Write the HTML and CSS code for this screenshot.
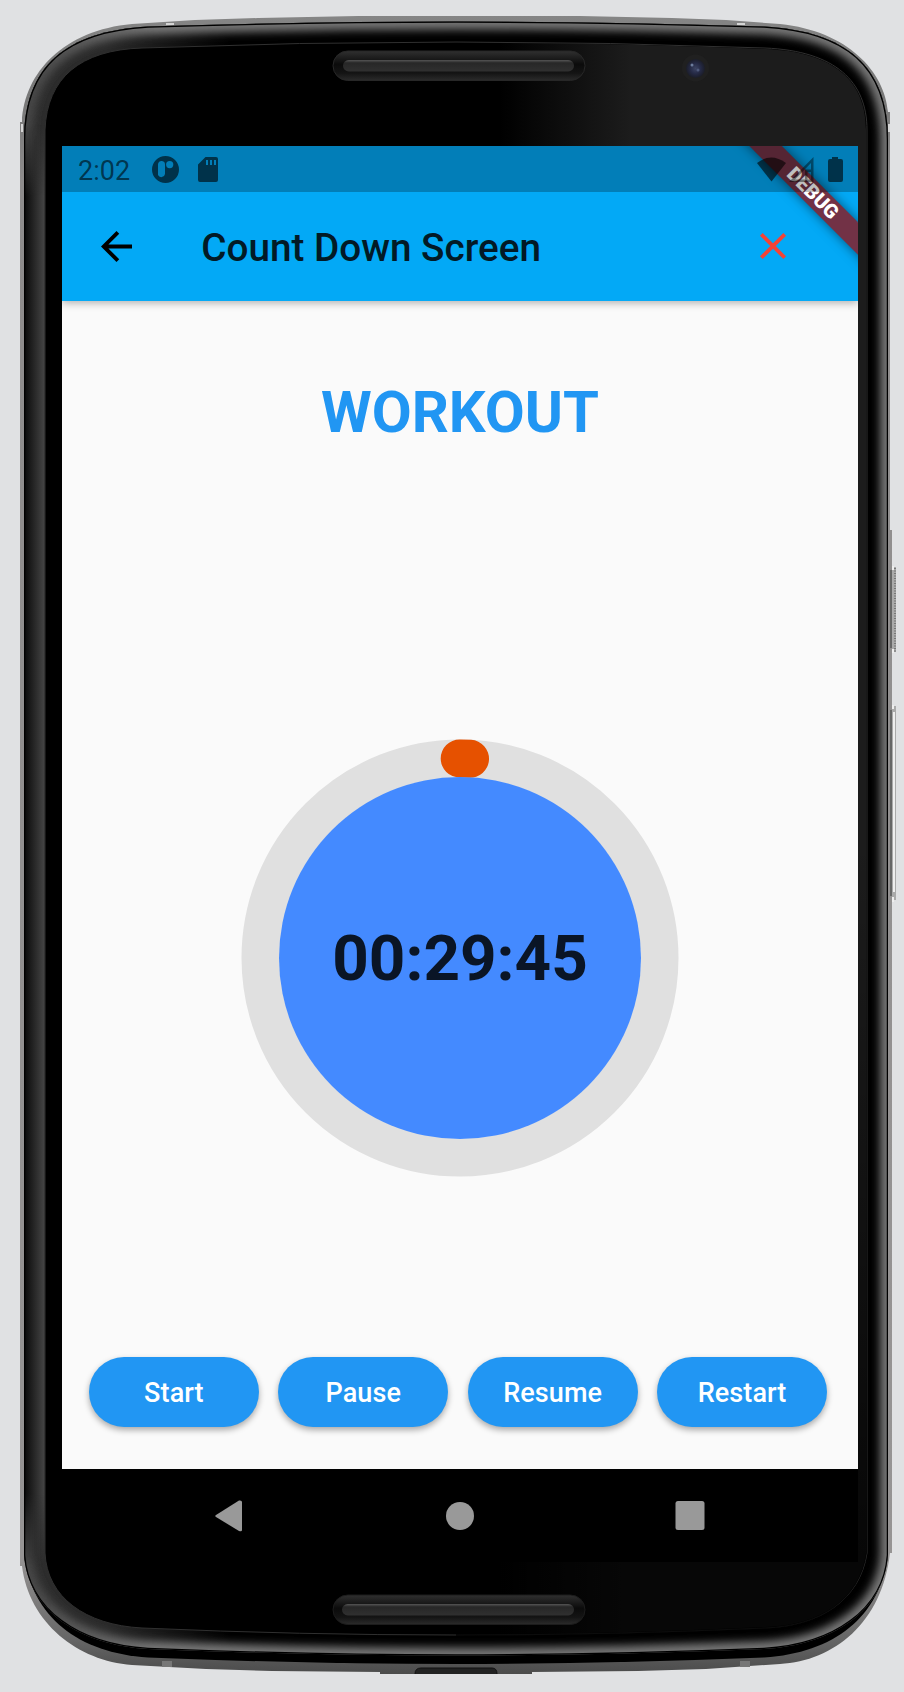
FILE: index.html
```html
<!DOCTYPE html>
<html lang="en">
<head>
<meta charset="utf-8">
<title>Count Down Screen</title>
<link rel="stylesheet" href="styles.css">
</head>
<body>
<div class="phone">
  <svg class="frame" viewBox="0 0 904 1692" aria-hidden="true">
    <defs>
      <path id="shell" d="M24 140 C24 66 66 31 148 26.500 Q310 21.500 456 21.500 Q602 21.500 764 26.500 C846 31 888 66 888 140 V1555 C880 1617 834 1653 764 1657.500 Q602 1664 456 1664 Q310 1664 148 1657.500 C78 1653 32 1617 24 1555 Z"/>
      <path id="body" d="M24 140 C24 66 66 31 148 26.500 Q310 21.500 456 21.500 Q602 21.500 764 26.500 C846 31 888 66 888 140 V1555 C884 1610 834 1645 764 1649 Q602 1655.500 456 1655.500 Q310 1655.500 148 1649 C78 1645 28 1610 24 1555 Z"/>
      <clipPath id="bodyClip"><use href="#body"/></clipPath>
      <filter id="soft" x="-5%" y="-5%" width="110%" height="110%"><feGaussianBlur stdDeviation="4"/></filter>
      <linearGradient id="rim" x1="0" x2="0" y1="0" y2="1"><stop offset="0" stop-color="#858585"/><stop offset=".05" stop-color="#777"/><stop offset=".1" stop-color="#8e8c8c"/><stop offset=".93" stop-color="#969494"/><stop offset=".98" stop-color="#656565"/><stop offset="1" stop-color="#4b4b4b"/></linearGradient>
      <linearGradient id="side" gradientUnits="userSpaceOnUse" x1="24" x2="46" y1="0" y2="0"><stop offset="0" stop-color="#080808"/><stop offset=".9" stop-color="#434343"/><stop offset="1" stop-color="#222"/></linearGradient>
      <linearGradient id="fade" gradientUnits="userSpaceOnUse" x1="0" x2="0" y1="125" y2="1565"><stop offset="0" stop-color="#000"/><stop offset=".05" stop-color="#fff"/><stop offset=".95" stop-color="#fff"/><stop offset="1" stop-color="#000"/></linearGradient>
      <mask id="sideFade" maskUnits="userSpaceOnUse" x="20" y="120" width="30" height="1450"><path fill="url(#fade)" d="M20 120H50V1570H20z"/></mask>
      <linearGradient id="corner" gradientUnits="userSpaceOnUse" x1="24" x2="230" y1="0" y2="0"><stop offset="0" stop-color="#2d2d2d"/><stop offset=".4" stop-color="#2a2a2a"/><stop offset="1" stop-color="#000"/></linearGradient>
      <linearGradient id="edge" gradientUnits="userSpaceOnUse" x1="24" x2="888" y1="0" y2="0"><stop offset="0" stop-color="#444"/><stop offset=".15" stop-color="#777"/><stop offset="1" stop-color="#777"/></linearGradient>
      <linearGradient id="glass" gradientUnits="userSpaceOnUse" x1="500" x2="630" y1="0" y2="0"><stop offset="0" stop-color="#1c1c1c" stop-opacity="0"/><stop offset="1" stop-color="#1c1c1c"/></linearGradient>
      <linearGradient id="dim" x1="0" x2="0" y1="0" y2="1"><stop offset=".5" stop-color="#000" stop-opacity="0"/><stop offset=".95" stop-color="#000" stop-opacity=".75"/></linearGradient>
      <linearGradient id="slot" x1="0" x2="0" y1="0" y2="1"><stop offset="0" stop-color="#303030"/><stop offset=".45" stop-color="#0b0b0b"/><stop offset=".75" stop-color="#141414"/><stop offset="1" stop-color="#2b2b2b"/></linearGradient>
      <linearGradient id="bar" x1="0" x2="0" y1="0" y2="1"><stop offset="0" stop-color="#555"/><stop offset=".25" stop-color="#272727"/><stop offset="1" stop-color="#303030"/></linearGradient>
      <radialGradient id="lens"><stop offset="0" stop-color="#3c4463"/><stop offset=".55" stop-color="#252a46"/><stop offset="1" stop-color="#1b1d28"/></radialGradient>
    </defs>
    <path fill="url(#rim)" d="M20 122 H22 C24 72 65 30 132 24 L195 20 L258 18 L358 16 H580 L672 18 L726 20 L780 24 C848 31 885 72 888 112 H890 V530 H892 V1553 H890 C882 1623 834 1661 780 1664 L706 1669 L638 1671 L532 1672 V1674 H380 V1672 L272 1671 L206 1669 L132 1665 C78 1661 29 1623 22 1566 H20 Z"/>
    <use href="#shell"/>
    <g clip-path="url(#bodyClip)">
      <use href="#body" fill="url(#corner)"/>
      <use href="#body" fill="none" stroke="url(#edge)" stroke-width="16" filter="url(#soft)"/>
      <path fill="url(#side)" mask="url(#sideFade)" d="M24 125 H45 V1565 H24Z"/>
      <use href="#body" fill="none" stroke="#000" stroke-width="2.500"/>
    </g>
    <path stroke="#303030" d="M45 130 C47 78 80 50 142 48 Q300 42 456 42 Q610 42 765 48 C836 51 867 82 867 130 V1553 C860 1600 820 1626 765 1628 Q610 1635 456 1635 Q300 1635 142 1628 C85 1625 47 1597 45 1553Z"/>
    <path fill="url(#glass)" d="M500 43 Q610 43 765 49 C836 52 866 82 866 130 V1553 C859 1600 820 1625 765 1627 Q610 1634 500 1634Z"/>
    <path fill="url(#dim)" d="M456 42 Q610 42 765 48 C836 51 867 82 867 130 V1553 C860 1600 820 1627 765 1629 Q610 1636 456 1636Z"/>
    <rect x="333" y="51" width="252" height="29.500" rx="14.750" fill="url(#slot)" stroke="#272727"/>
    <rect x="343" y="60" width="231" height="11.500" rx="5.750" fill="url(#bar)"/>
    <rect x="333" y="1595" width="252" height="29.500" rx="14.750" fill="url(#slot)" stroke="#1c1c1c"/>
    <rect x="342" y="1604" width="232" height="11.500" rx="5.750" fill="url(#bar)"/>
    <circle cx="695.500" cy="68" r="13.500" fill="#202020"/>
    <circle cx="695.500" cy="68.500" r="9.500" fill="url(#lens)"/>
    <circle cx="692" cy="65" r="1.500" fill="#6c7c9c"/><circle cx="698" cy="70" r="1.500" fill="#4f5a7c"/>
    <path fill="#222" stroke="#111" d="M415 1674 Q415 1668 421 1668 H492 Q497 1668 497 1674"/>
    <path fill="#d5d5d5" d="M166 23h8v2h-8zM737 23h8v2h-8zM21 124h2v8h-2zM888 124h2v8h-2z"/>
    <path fill="#777" d="M162 1661h10v6h-10zM740 1661h10v6h-10z"/>
    <path fill="#aaa" d="M892 567h4v85h-4zM892 706h4v194h-4z"/>
    <path stroke="#777" stroke-width="2" stroke-dasharray="1 1.500" d="M895 568V652"/>
    <path stroke="#eee" stroke-width="2" d="M893 566v4M893 649v4M893 705v4M893 897v5M894 712V892"/>
    <path stroke="#666" stroke-width="2" d="M891 570V648M891 710V896"/>
  </svg>
  <main class="screen">
    <div class="app">
      <header class="appbar">
        <svg class="back" viewBox="4 4 16 16"><path d="M20 11H7.830l5.590-5.590L12 4l-8 8 8 8 1.410-1.410L7.830 13H20v-2z"/></svg>
        <h1 class="title">Count Down Screen</h1>
        <svg class="close" viewBox="0 0 28 28"><path d="M2.300 2.300 25.700 25.700M25.700 2.300 2.300 25.700"/></svg>
      </header>
      <section class="content">
        <h2 class="phase">WORKOUT</h2>
        <div class="timer">
          <svg class="ring" viewBox="0 0 436 436">
            <circle class="track" cx="218" cy="218" r="199.500"/>
            <path class="progress" d="M217.700 18.500 Q223 18.500 228 18.800"/>
            <circle class="disc" cx="218" cy="218" r="181"/>
          </svg>
          <span class="time">00:29:45</span>
        </div>
        <div class="actions">
          <button class="btn">Start</button>
          <button class="btn">Pause</button>
          <button class="btn">Resume</button>
          <button class="btn">Restart</button>
        </div>
      </section>
      <div class="banner">DEBUG</div>
      <div class="status">
        <span class="clock">2:02</span>
        <svg class="badge" viewBox="0 0 27 27"><path fill-rule="evenodd" d="M13.500 0a13.500 13.500 0 1 0 0 27 13.500 13.500 0 1 0 0-27zM10 5a3.500 3.500 0 0 1 3 3.500V18a3.700 3.700 0 0 1-7 1V8.500A3.500 3.500 0 0 1 10 5zM17.700 5a3.600 3.600 0 1 1 0 7.200 3.600 3.600 0 0 1 0-7.200z"/></svg>
        <svg class="sd" viewBox="0 0 20 25"><path fill-rule="evenodd" d="M7.500 0H18a2 2 0 0 1 2 2v21a2 2 0 0 1-2 2H2a2 2 0 0 1-2-2V7.500zM8 3v5h2V3zM12 3v5h2V3zM16 3v5h2V3z"/></svg>
        <svg class="signals" viewBox="0 0 86 26"><path d="M0 6Q14-5 29 6L14.500 24.500z"/><path fill-rule="evenodd" d="M56.500 0V25H32zM54 6 38 22.500h10V12.500h6zM50.500 15v7.500H54V15z" opacity=".7"/><path d="M75 0h6v2h3a2 2 0 0 1 2 2v19a2 2 0 0 1-2 2H73a2 2 0 0 1-2-2V4a2 2 0 0 1 2-2h2z"/></svg>
      </div>
    </div>
    <nav class="nav">
      <svg viewBox="0 0 30 32"><path d="M24 .500Q27 0 27 2V30Q27 32 24 31L1 17Q-.500 16 1 15z"/></svg>
      <svg viewBox="0 0 30 32"><circle cx="15" cy="16" r="14"/></svg>
      <svg viewBox="0 0 30 32"><rect x=".500" y="1" width="29" height="29" rx="2.500"/></svg>
    </nav>
  </main>
</div>
</body>
</html>
```
FILE: styles.css
```css
* { box-sizing: border-box; }
body { margin: 0; background: #e0e1e3; font-family: Roboto, "Liberation Sans", sans-serif; }
.phone { position: relative; width: 904px; height: 1692px; padding: 146px 46px 130px 62px; overflow: hidden; }
.frame { position: absolute; inset: 0; width: 904px; height: 1692px; }
.screen { position: relative; width: 796px; height: 1416px; background: #000; }
.app { position: relative; height: 1323px; overflow: hidden; background: #fafafa; display: flex; flex-direction: column; }
.appbar { position: relative; z-index: 1; flex: none; height: 155px; padding: 46px 71px 0 39px; display: flex; align-items: center; background: #03a9f6; box-shadow: 0 2px 8px rgba(0,0,0,.3); }
.back { width: 31px; height: 31px; }
.title { margin: 2px auto 0 69.300px; font-size: 38.700px; line-height: 46px; font-weight: 500; color: #021a26; white-space: nowrap; }
.close { width: 28px; height: 28px; margin-top: -1px; fill: none; stroke: #f44336; stroke-width: 3.800; }
.content { flex: 1; display: flex; flex-direction: column; align-items: center; }
.phase { margin: 77px 0 0; font-size: 58px; line-height: 68px; font-weight: 700; color: #2196f3; }
.timer { width: 436px; height: 436px; margin-top: 293.500px; display: grid; place-items: center; }
.ring, .time { grid-area: 1 / 1; }
.ring { width: 436px; height: 436px; overflow: visible; }
.track { fill: none; stroke: #e0e0e0; stroke-width: 38; }
.progress { fill: none; stroke: #e65100; stroke-width: 38; stroke-linecap: round; }
.disc { fill: #448aff; }
.time { padding-top: 3px; font-size: 63.800px; line-height: 76px; font-weight: 700; color: #0a1526; }
.actions { margin: 181.500px 4px 0 0; display: flex; gap: 19.400px; }
.btn { width: 170px; height: 69.500px; padding: 2px 0 0; border: 0; border-radius: 35px; background: #2196f3; color: #fff; font: 500 27px/32px Roboto, sans-serif; letter-spacing: .1px; box-shadow: 0 3px 6px rgba(0,0,0,.33); }
.banner { position: absolute; z-index: 2; left: 600px; top: 35px; width: 300px; height: 23.300px; transform: rotate(45deg); background: rgba(141,22,28,.813); box-shadow: 0 0 12px rgba(0,0,0,.5); color: #fff; text-align: center; font-size: 19.900px; line-height: 23.300px; font-weight: 900; padding-left: 2px; }
.status { position: absolute; z-index: 3; inset: 0 0 auto; height: 46px; padding: 0 15px 0 16px; display: flex; align-items: center; background: rgba(0,0,0,.25); color: rgba(0,0,0,.58); font-size: 27px; }
.status svg { fill: rgba(0,0,0,.6); }
.clock { padding-top: 3px; }
.badge { width: 27px; height: 27px; margin: 1px 19px 0 22px; }
.sd { width: 20px; height: 25px; }
.signals { width: 86px; height: 26px; margin: 2px 0 0 auto; }
.nav { height: 93px; padding: 0 153.500px 0 153px; display: flex; align-items: center; justify-content: space-between; }
.nav svg { width: 30px; height: 32px; fill: #999; }
```
